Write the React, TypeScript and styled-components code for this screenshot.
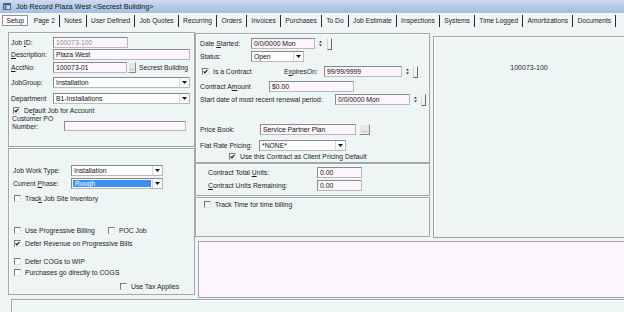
import React from "react";
import styled, { createGlobalStyle } from "styled-components";

const GlobalStyle = createGlobalStyle`
  html, body {
    margin: 0;
    padding: 0;
  }
  body {
    background: #eef6f5;
    font-family: "Liberation Sans", Arial, sans-serif;
    font-size: 6.8px;
    color: #1c1c1c;
  }
`;

const Window = styled.div`
  width: 624px;
  height: 312px;
  overflow: hidden;
  display: flex;
  flex-direction: column;
  background: #eef6f5;
`;

const TitleBar = styled.div`
  height: 13px;
  flex-shrink: 0;
  display: flex;
  align-items: center;
  gap: 5px;
  padding-left: 3px;
  background: linear-gradient(to bottom, #cfdcee 0%, #b3c8e6 55%, #a6bee2 100%);
  font-size: 7.1px;
  color: #141414;
  letter-spacing: 0.05px;
`;

const TabStrip = styled.div`
  height: 15px;
  flex-shrink: 0;
  display: flex;
  align-items: center;
  padding-left: 2px;
  background: #f1f5f6;
  font-size: 6.7px;
`;

const ActiveTab = styled.div`
  height: 11px;
  box-sizing: border-box;
  padding: 0 3.5px;
  margin-right: 1px;
  display: flex;
  align-items: center;
  border: 1px solid #8e9494;
  background: #f9fbfb;
`;

const Tab = styled.div`
  height: 12px;
  display: flex;
  align-items: center;
  padding: 0 4.2px;
  border-right: 1px solid #2a2a2a;
  white-space: nowrap;
`;

const Body = styled.div`
  height: 267px;
  flex-shrink: 0;
  margin-top: 4px;
  padding-left: 8px;
  display: flex;
  align-items: flex-start;
`;

const Column = styled.div<{ $w: number; $mt?: number }>`
  width: ${(p) => p.$w}px;
  flex-shrink: 0;
  margin-top: ${(p) => p.$mt ?? 0}px;
  display: flex;
  flex-direction: column;
`;

const Panel = styled.div<{ $h: number; $pl?: number; $mt?: number }>`
  box-sizing: border-box;
  height: ${(p) => p.$h}px;
  margin-top: ${(p) => p.$mt ?? 0}px;
  padding-left: ${(p) => p.$pl ?? 0}px;
  border: 1px solid #a3a7a7;
  box-shadow: inset 1px 1px 0 #fbfdfd;
  display: flex;
  flex-direction: column;
  flex-shrink: 0;
`;

const RightArea = styled.div`
  flex: 1;
  display: flex;
  flex-direction: column;
`;

const TopRow = styled.div`
  display: flex;
  align-items: flex-start;
`;

const PreviewPanel = styled.div`
  flex: 1;
  height: 202px;
  margin: 4px 0 0 3px;
  box-sizing: border-box;
  border: 1px solid #9fa3a3;
  border-right: none;
  box-shadow: inset 1px 1px 0 #fbfdfd;
  padding-top: 27px;
  text-align: center;
  font-size: 7px;
`;

const NotesBox = styled.div`
  height: 57px;
  margin: 3px 0 0 3px;
  box-sizing: border-box;
  border: 1px solid #a0a4a4;
  border-right: none;
  background: #fcf6fc;
`;

const FooterPanel = styled.div`
  height: 20px;
  margin-left: 11px;
  flex-shrink: 0;
  box-sizing: border-box;
  border: 1px solid #a0a4a4;
  border-right: none;
  box-shadow: inset 1px 1px 0 #fbfdfd;
`;

const Row = styled.div<{ $mt: number; $h?: number; $ml?: number; $align?: string }>`
  display: flex;
  align-items: ${(p) => p.$align ?? "center"};
  height: ${(p) => p.$h ?? 11}px;
  margin-top: ${(p) => p.$mt}px;
  margin-left: ${(p) => p.$ml ?? 0}px;
  flex-shrink: 0;
  white-space: nowrap;
`;

const Label = styled.span<{ $w: number }>`
  width: ${(p) => p.$w}px;
  flex-shrink: 0;
  white-space: nowrap;
  line-height: 8px;
`;

const TextBox = styled.div<{ $w: number; $h?: number; $muted?: boolean }>`
  width: ${(p) => p.$w}px;
  height: ${(p) => p.$h ?? 11}px;
  box-sizing: border-box;
  flex-shrink: 0;
  display: flex;
  align-items: center;
  padding-left: 2px;
  border: 1px solid;
  border-color: #8a8a8a #b9b9b9 #b9b9b9 #8a8a8a;
  background: #fcf6fc;
  color: ${(p) => (p.$muted ? "#8b8b8b" : "#151515")};
  overflow: hidden;
`;

const Combo = styled.div<{ $w: number }>`
  width: ${(p) => p.$w}px;
  height: 11px;
  box-sizing: border-box;
  flex-shrink: 0;
  display: flex;
  border: 1px solid;
  border-color: #8a8a8a #b9b9b9 #b9b9b9 #8a8a8a;
  background: #fefefe;
`;

const ComboValue = styled.div<{ $selected?: boolean }>`
  flex: 1;
  display: flex;
  align-items: center;
  padding-left: 2px;
  margin: ${(p) => (p.$selected ? "1px" : "0")};
  background: ${(p) => (p.$selected ? "#3d8ff2" : "transparent")};
  color: ${(p) => (p.$selected ? "#ffffff" : "#151515")};
`;

const DropButton = styled.div`
  width: 9px;
  flex-shrink: 0;
  display: flex;
  align-items: center;
  justify-content: center;
  border-left: 1px solid #d4d4d4;
  background: #fbfbfb;
`;

const DotsButton = styled.div<{ $w: number; $ml: number }>`
  width: ${(p) => p.$w}px;
  height: 11px;
  margin-left: ${(p) => p.$ml}px;
  box-sizing: border-box;
  flex-shrink: 0;
  display: flex;
  align-items: flex-end;
  justify-content: center;
  border: 1px solid;
  border-color: #f4f4f4 #8a8a8a #8a8a8a #f4f4f4;
  background: #e6e8e8;
  font-size: 6px;
  line-height: 7px;
  color: #333;
`;

const Spin = styled.div<{ $ml: number }>`
  margin-left: ${(p) => p.$ml}px;
  width: 5px;
  height: 9px;
  flex-shrink: 0;
  display: flex;
  align-items: center;
`;

const TinyButton = styled.div<{ $ml: number }>`
  margin-left: ${(p) => p.$ml}px;
  width: 5px;
  height: 12px;
  box-sizing: border-box;
  flex-shrink: 0;
  border: 1px solid;
  border-color: #f6f6f6 #6a6a6a #6a6a6a #d6d6d6;
  background: #f3f4f4;
`;

const CheckItem = styled.label<{ $w?: number }>`
  display: flex;
  align-items: center;
  gap: 4px;
  flex-shrink: 0;
  width: ${(p) => (p.$w ? `${p.$w}px` : "auto")};
  white-space: nowrap;
`;

const Box = styled.span`
  width: 7px;
  height: 7px;
  box-sizing: border-box;
  flex-shrink: 0;
  display: flex;
  align-items: center;
  justify-content: center;
  border: 1px solid;
  border-color: #7a7a7a #e4e4e4 #e4e4e4 #7a7a7a;
  background: #ffffff;
`;

const SideText = styled.span<{ $ml: number }>`
  margin-left: ${(p) => p.$ml}px;
  white-space: nowrap;
`;

const tabs = [
  "Page 2",
  "Notes",
  "User Defined",
  "Job Quotes",
  "Recurring",
  "Orders",
  "Invoices",
  "Purchases",
  "To Do",
  "Job Estimate",
  "Inspections",
  "Systems",
  "Time Logged",
  "Amortizations",
  "Documents",
];

function AppIcon() {
  return (
    <svg width="8" height="7" viewBox="0 0 8 7">
      <rect x="0.5" y="0.5" width="7" height="6" fill="#d9dde2" stroke="#5c6670" />
      <rect x="1" y="1" width="6" height="1.4" fill="#2f5fa8" />
      <rect x="1.5" y="3" width="2" height="3" fill="#3f6fb5" />
    </svg>
  );
}

function Check({ on, label, w }: { on?: boolean; label: React.ReactNode; w?: number }) {
  return (
    <CheckItem $w={w}>
      <Box>
        {on && (
          <svg width="5" height="5" viewBox="0 0 5 5">
            <path d="M0.6 2.4 L1.9 3.8 L4.4 0.9" fill="none" stroke="#111" strokeWidth="1.2" />
          </svg>
        )}
      </Box>
      <span>{label}</span>
    </CheckItem>
  );
}

function Select({ w, value, selected }: { w: number; value: string; selected?: boolean }) {
  return (
    <Combo $w={w}>
      <ComboValue $selected={selected}>{value}</ComboValue>
      <DropButton>
        <svg width="5" height="3" viewBox="0 0 5 3">
          <path d="M0 0 H5 L2.5 3 Z" fill="#111" />
        </svg>
      </DropButton>
    </Combo>
  );
}

function Spinner({ ml, bl }: { ml: number; bl: number }) {
  return (
    <>
      <Spin $ml={ml}>
        <svg width="5" height="9" viewBox="0 0 5 9">
          <path d="M1 3.5 L2.5 1.8 L4 3.5 Z" fill="#222" />
          <path d="M1 5.5 L2.5 7.2 L4 5.5 Z" fill="#222" />
        </svg>
      </Spin>
      <TinyButton $ml={bl} />
    </>
  );
}

export default function App() {
  return (
    <Window>
      <GlobalStyle />
      <TitleBar>
        <AppIcon />
        <span>Job Record Plaza West &lt;Secrest Building&gt;</span>
      </TitleBar>

      <TabStrip>
        <ActiveTab>Setup</ActiveTab>
        {tabs.map((t) => (
          <Tab key={t}>{t}</Tab>
        ))}
      </TabStrip>

      <Body>
        <Column $w={187}>
          <Panel $h={115} $pl={2}>
            <Row $mt={4}>
              <Label $w={42}>
                Job <u>I</u>D:
              </Label>
              <TextBox $w={75} $muted>
                100073-100
              </TextBox>
            </Row>
            <Row $mt={1}>
              <Label $w={42}>
                <u>D</u>escription:
              </Label>
              <TextBox $w={137}>Plaza West</TextBox>
            </Row>
            <Row $mt={2}>
              <Label $w={42}>
                <u>A</u>cctNo:
              </Label>
              <TextBox $w={74}>100073-01</TextBox>
              <DotsButton $w={8} $ml={1}>...</DotsButton>
              <SideText $ml={3}>Secrest Building</SideText>
            </Row>
            <Row $mt={4}>
              <Label $w={42}>JobGroup:</Label>
              <Select w={137} value="Installation" />
            </Row>
            <Row $mt={5}>
              <Label $w={42}>Department</Label>
              <Select w={137} value="B1-Installations" />
            </Row>
            <Row $mt={2} $h={8} $ml={2}>
              <Check
                on
                label={
                  <>
                    De<u>f</u>ault Job for Account
                  </>
                }
              />
            </Row>
            <Row $mt={1} $h={16} $ml={1} $align="flex-end">
              <Label $w={52}>
                Customer PO
                <br />
                Number:
              </Label>
              <TextBox $w={122} $h={10} />
            </Row>
          </Panel>

          <Panel $h={147} $mt={1} $pl={4}>
            <Row $mt={16}>
              <Label $w={58}>Job Work Type:</Label>
              <Select w={92} value="Installation" />
            </Row>
            <Row $mt={2}>
              <Label $w={58}>
                Current <u>P</u>hase:
              </Label>
              <Select w={92} value="Rough" selected />
            </Row>
            <Row $mt={5} $h={8} $ml={1}>
              <Check
                label={
                  <>
                    Trac<u>k</u> Job Site Inventory
                  </>
                }
              />
            </Row>
            <Row $mt={24} $h={8} $ml={1}>
              <Check w={94} label="Use Progressive Billing" />
              <Check label="POC Job" />
            </Row>
            <Row $mt={5} $h={8} $ml={1}>
              <Check on label="Defer Revenue on Progressive Bills" />
            </Row>
            <Row $mt={10} $h={8} $ml={1}>
              <Check label="Defer COGs to WIP" />
            </Row>
            <Row $mt={3} $h={8} $ml={1}>
              <Check label="Purchases go directly to COGS" />
            </Row>
            <Row $mt={6} $h={8} $ml={107}>
              <Check label="Use Tax Applies" />
            </Row>
          </Panel>
        </Column>

        <RightArea>
          <TopRow>
            <Column $w={235} $mt={1}>
              <Panel $h={130} $pl={4}>
                <Row $mt={4}>
                  <Label $w={51}>
                    Date <u>S</u>tarted:
                  </Label>
                  <TextBox $w={64}>0/0/0000 Mon</TextBox>
                  <Spinner ml={3} bl={4} />
                </Row>
                <Row $mt={2}>
                  <Label $w={51}>Status:</Label>
                  <Select w={53} value="Open" />
                </Row>
                <Row $mt={4} $ml={2}>
                  <Check w={82} on label="Is a Contract" />
                  <Label $w={40}>
                    E<u>x</u>piresOn:
                  </Label>
                  <TextBox $w={78}>99/99/9999</TextBox>
                  <Spinner ml={3} bl={3} />
                </Row>
                <Row $mt={4}>
                  <Label $w={69}>
                    Contract A<u>m</u>ount
                  </Label>
                  <TextBox $w={85}>$0.00</TextBox>
                </Row>
                <Row $mt={2}>
                  <Label $w={135}>Start date of most recent renewal period:</Label>
                  <TextBox $w={75}>0/0/0000 Mon</TextBox>
                  <Spinner ml={3} bl={3} />
                </Row>
                <Row $mt={19}>
                  <Label $w={60}>Price Book:</Label>
                  <TextBox $w={96}>Service Partner Plan</TextBox>
                  <DotsButton $w={11} $ml={3}>...</DotsButton>
                </Row>
                <Row $mt={5}>
                  <Label $w={59}>Flat Rate Pricing:</Label>
                  <Select w={87} value="*NONE*" />
                </Row>
                <Row $mt={1} $h={8} $ml={29}>
                  <Check on label="Use this Contract as Client Pricing Default" />
                </Row>
              </Panel>

              <Panel $h={33} $pl={12}>
                <Row $mt={3}>
                  <Label $w={109}>
                    Contract Total <u>U</u>nits:
                  </Label>
                  <TextBox $w={45}>0.00</TextBox>
                </Row>
                <Row $mt={2}>
                  <Label $w={109}>
                    <u>C</u>ontract Units Remaining:
                  </Label>
                  <TextBox $w={45}>0.00</TextBox>
                </Row>
              </Panel>

              <Panel $h={40} $mt={1} $pl={8}>
                <Row $mt={2} $h={8}>
                  <Check label="Track Time for time billing" />
                </Row>
              </Panel>
            </Column>

            <PreviewPanel>100073-100</PreviewPanel>
          </TopRow>

          <NotesBox />
        </RightArea>
      </Body>

      <FooterPanel />
    </Window>
  );
}
